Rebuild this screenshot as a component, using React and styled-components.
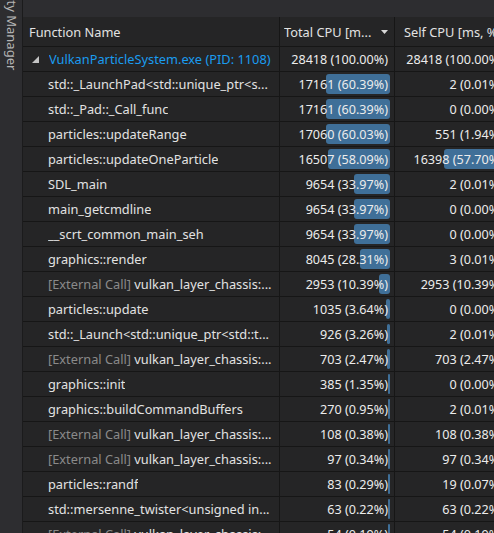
import styled, { createGlobalStyle } from "styled-components";

const GlobalStyle = createGlobalStyle`
  html, body {
    margin: 0;
    padding: 0;
    background: #252526;
    overflow: hidden;
  }
  body {
    font-family: "Noto Sans", "Open Sans", sans-serif;
    font-size: 12.8px;
    color: #dcdcdc;
  }
`;

const Page = styled.div`
  display: flex;
  width: 494px;
  height: 533px;
  overflow: hidden;
`;

const SideBar = styled.div`
  width: 22px;
  flex-shrink: 0;
  background: #2d2d30;
  border-right: 1px solid #1b1b1c;
  overflow: hidden;
`;

const SideTab = styled.div`
  writing-mode: vertical-rl;
  margin-top: -41px;
  margin-left: 2px;
  color: #b4b4b4;
  font-size: 13px;
  white-space: nowrap;
  line-height: 20px;
`;

const Main = styled.div`
  flex: 1;
  display: flex;
  flex-direction: column;
  min-width: 0;
  overflow: hidden;
`;

const TopStrip = styled.div`
  height: 17px;
  flex-shrink: 0;
  background: #2d2d30;
`;

const Row = styled.div`
  display: grid;
  flex-shrink: 0;
  grid-template-columns: 257px 115px 115px;
  height: ${(p) => (p.$header ? "29px" : "24px")};
  border-bottom: 1px solid #161616;
  background: #252526;
`;

const Cell = styled.div`
  position: relative;
  display: flex;
  align-items: center;
  justify-content: ${(p) => (p.$right ? "flex-end" : "flex-start")};
  padding: 0 ${(p) => p.$pr ?? 6}px 0 ${(p) => p.$pl || 0}px;
  border-right: 1px solid #161616;
  white-space: nowrap;
  overflow: hidden;
`;

const NameText = styled.span`
  color: ${(p) => (p.$root ? "#1a9cf0" : "#e2e2e2")};
  overflow: hidden;
  text-overflow: ellipsis;
`;

const Ext = styled.span`
  color: #8a8a8a;
`;

const HeadText = styled.span`
  color: #e2e2e2;
  flex: 1;
  overflow: hidden;
`;

const Num = styled.span`
  position: relative;
  z-index: 1;
  color: #ececec;
  font-size: 12.6px;
`;

const Bar = styled.div`
  position: absolute;
  right: 4px;
  top: 2px;
  bottom: 2px;
  background: #3f6f98;
  border-radius: 3px;
`;

const Expander = styled.svg`
  width: 7px;
  height: 7px;
  margin: 0 10px 0 9px;
  flex-shrink: 0;
`;

const SortArrow = styled.svg`
  width: 7px;
  height: 4px;
  margin-left: 4px;
  margin-right: 1px;
  flex-shrink: 0;
`;

const rows = [
  { name: "VulkanParticleSystem.exe (PID: 1108)", root: true, total: 28418, tp: 100.0, self: 28418, sp: 100.0 },
  { name: "std::_LaunchPad<std::unique_ptr<s...", total: 17161, tp: 60.39, self: 2, sp: 0.01 },
  { name: "std::_Pad::_Call_func", total: 17161, tp: 60.39, self: 0, sp: 0.0 },
  { name: "particles::updateRange", total: 17060, tp: 60.03, self: 551, sp: 1.94 },
  { name: "particles::updateOneParticle", total: 16507, tp: 58.09, self: 16398, sp: 57.7 },
  { name: "SDL_main", total: 9654, tp: 33.97, self: 2, sp: 0.01 },
  { name: "main_getcmdline", total: 9654, tp: 33.97, self: 0, sp: 0.0 },
  { name: "__scrt_common_main_seh", total: 9654, tp: 33.97, self: 0, sp: 0.0 },
  { name: "graphics::render", total: 8045, tp: 28.31, self: 3, sp: 0.01 },
  { name: "vulkan_layer_chassis:...", ext: true, total: 2953, tp: 10.39, self: 2953, sp: 10.39 },
  { name: "particles::update", total: 1035, tp: 3.64, self: 0, sp: 0.0 },
  { name: "std::_Launch<std::unique_ptr<std::t...", total: 926, tp: 3.26, self: 2, sp: 0.01 },
  { name: "vulkan_layer_chassis:...", ext: true, total: 703, tp: 2.47, self: 703, sp: 2.47 },
  { name: "graphics::init", total: 385, tp: 1.35, self: 0, sp: 0.0 },
  { name: "graphics::buildCommandBuffers", total: 270, tp: 0.95, self: 2, sp: 0.01 },
  { name: "vulkan_layer_chassis:...", ext: true, total: 108, tp: 0.38, self: 108, sp: 0.38 },
  { name: "vulkan_layer_chassis:...", ext: true, total: 97, tp: 0.34, self: 97, sp: 0.34 },
  { name: "particles::randf", total: 83, tp: 0.29, self: 19, sp: 0.07 },
  { name: "std::mersenne_twister<unsigned in...", total: 63, tp: 0.22, self: 63, sp: 0.22 },
  { name: "vulkan_layer_chassis:...", ext: true, total: 54, tp: 0.19, self: 54, sp: 0.19 },
];

const BAR_MAX = 106;

function CpuCell({ value, pct, root }) {
  const w = pct > 0 ? Math.max(2, Math.round((pct / 100) * BAR_MAX)) : 0;
  return (
    <Cell $right>
      {!root && w > 0 && <Bar style={{ width: w }} />}
      <Num>
        {value} ({pct.toFixed(2)}%)
      </Num>
    </Cell>
  );
}

export default function App() {
  return (
    <>
      <GlobalStyle />
      <Page>
        <SideBar>
          <SideTab>Property Manager</SideTab>
        </SideBar>
        <Main>
          <TopStrip />
          <Row $header>
            <Cell $pl={6}>
              <HeadText>Function Name</HeadText>
            </Cell>
            <Cell $pl={4} $pr={5}>
              <HeadText>Total CPU [m...</HeadText>
              <SortArrow viewBox="0 0 7 4">
                <polygon points="0,0 7,0 3.5,4" fill="#d8d8d8" />
              </SortArrow>
            </Cell>
            <Cell $pl={9}>
              <HeadText>Self CPU [ms, %]</HeadText>
            </Cell>
          </Row>
          {rows.map((r, i) => (
            <Row key={i}>
              <Cell $pl={r.root ? 0 : 25} $pr={0}>
                {r.root && (
                  <Expander viewBox="0 0 7 7">
                    <polygon points="7,0 7,7 0,7" fill="#c4c4c4" />
                  </Expander>
                )}
                <NameText $root={r.root}>
                  {r.ext && <Ext>[External Call] </Ext>}
                  {r.name}
                </NameText>
              </Cell>
              <CpuCell value={r.total} pct={r.tp} root={r.root} />
              <CpuCell value={r.self} pct={r.sp} root={r.root} />
            </Row>
          ))}
        </Main>
      </Page>
    </>
  );
}
